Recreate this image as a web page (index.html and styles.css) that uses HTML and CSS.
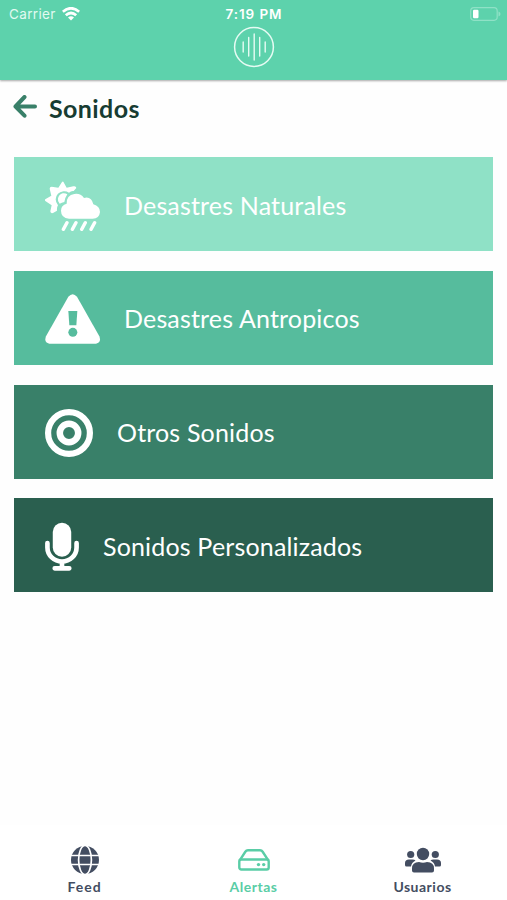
FILE: index.html
```html
<!DOCTYPE html>
<html lang="es">
<head>
    <meta charset="UTF-8">
    <meta name="viewport" content="width=device-width, initial-scale=1.0">
    <title>Sonidos</title>
    <link rel="stylesheet" href="styles.css">
</head>
<body>
    <header class="header">
        <div class="status">
            <div class="carrier">
                <span>Carrier</span>
                <svg width="18" height="14" viewBox="0 0 18 14" fill="none" stroke="#fff" stroke-width="2.8">
                    <path d="M.8 4.8Q9-2.2 17.2 4.8"/>
                    <path d="M3.8 8.2Q9 3.7 14.2 8.2"/>
                    <path d="M6 10.5Q9 8 12 10.5L9 13.5z" fill="#fff" stroke="none"/>
                </svg>
            </div>
            <span class="time">7:19 PM</span>
            <svg class="battery" width="31" height="14" viewBox="0 0 31 14">
                <rect x=".7" y=".7" width="26.5" height="12.6" rx="3.2" fill="none" stroke="#8fe1c6" stroke-width="1.2"/>
                <rect x="3" y="2.8" width="5.5" height="8.5" rx="1.2" fill="#fff"/>
                <path d="M28.5 4.5q2 .8 2 2.5t-2 2.5z" fill="#8fe1c6"/>
            </svg>
        </div>
        <svg class="logo" width="42" height="42" viewBox="0 0 42 42" fill="none" stroke="#e6fbf3">
            <circle cx="21" cy="21" r="19.4" stroke-width="1.5"/>
            <path d="M10.2 16v10M15.7 11.5v18.5M21.2 8v26M26.7 11.5v18.5M32.2 16v10" stroke-width="1.4" stroke-linecap="round"/>
        </svg>
    </header>

    <div class="title">
        <svg width="24" height="23" viewBox="0 0 24 23" fill="none" stroke="#398069" stroke-width="4" stroke-linecap="round" stroke-linejoin="round">
            <path d="M11.5 2L2.5 11.5l9 9.2M2.5 11.5H22"/>
        </svg>
        <h1>Sonidos</h1>
    </div>

    <main class="menu">
        <div class="item naturales">
            <svg width="56" height="50" viewBox="0 0 168 150" fill="#fff">
                <path d="M55 2L65 20 85 16Q93 14 94 21L86 30Q78 29 72 35Q64 30 55 31Q34 34 32 55Q32 64 39 73Q35 79 36 89L24 96Q16 98 16 91L20 73 1 60Q-2 57 2 54L19 44 14 23Q14 17 20 17L40 20 51 3Q53 0 55 2z"/>
                <path d="M67 40Q60 50 58 63Q50 65 44 68Q37 59 39 52Q42 40 53 37Q61 36 67 40z"/>
                <path d="M72 113Q48 111 48 89Q48 72 65 68Q64 43 88 39Q106 36 117 51Q139 45 145 70Q165 76 165 93Q163 113 143 113z"/>
                <path d="M66 125l-11 20M93 125l-11 20M121 125l-11 20M149 125l-11 20" stroke="#fff" stroke-width="10" stroke-linecap="round"/>
            </svg>
            <span>Desastres Naturales</span>
        </div>
        <div class="item antropicos">
            <svg width="56" height="50" viewBox="0 0 168 150" fill="#fff">
                <path d="M70 8Q83-7 96 8L163 127Q170 145 153 149H13Q-4 145 3 127z"/>
                <path d="M70 51H97L94 94H73z" fill="#56bc9d"/>
                <circle cx="83.5" cy="115" r="13.5" fill="#56bc9d"/>
            </svg>
            <span>Desastres Antropicos</span>
        </div>
        <div class="item otros">
            <svg width="48" height="48" viewBox="0 0 48 48" fill="none" stroke="#fff">
                <circle cx="24" cy="24" r="20.9" stroke-width="6.2"/>
                <circle cx="24" cy="24" r="9.2" stroke-width="6.5"/>
            </svg>
            <span>Otros Sonidos</span>
        </div>
        <div class="item personalizados">
            <svg width="34" height="50" viewBox="0 0 35 50">
                <rect x="8" y="0" width="19" height="35" rx="9.5" fill="#fff"/>
                <path d="M2.5 21v4.500a15 14.500 0 0 0 30 0V21M17.500 41v5M10 47h15" fill="none" stroke="#fff" stroke-width="4.8" stroke-linecap="round"/>
            </svg>
            <span>Sonidos Personalizados</span>
        </div>
    </main>

    <nav class="tabs">
        <div class="tab feed">
            <svg width="28" height="28" viewBox="0 0 28 28">
                <circle cx="14" cy="14" r="14" fill="#434d61"/>
                <g fill="none" stroke="#fff" stroke-width="1.7">
                    <ellipse cx="14" cy="14" rx="6.4" ry="14.5"/>
                    <path d="M0 9.5h28M0 18.5h28"/>
                </g>
            </svg>
            <span>Feed</span>
        </div>
        <div class="tab alertas">
            <svg width="32" height="28" viewBox="0 0 32 28" fill="none" stroke="#5acda6" stroke-width="2.4" stroke-linejoin="round">
                <rect x="1.3" y="13.5" width="29.4" height="10" rx="2"/>
                <path d="M1.7 14.3L7.5 5.5Q8.3 4.2 10 4.2H22Q23.7 4.2 24.5 5.5L30.3 14.3"/>
                <circle cx="20.5" cy="18.6" r="1.7" fill="#5acda6" stroke="none"/>
                <circle cx="25.7" cy="18.6" r="1.7" fill="#5acda6" stroke="none"/>
            </svg>
            <span>Alertas</span>
        </div>
        <div class="tab usuarios">
            <svg width="36" height="28" viewBox="0 0 36 28" fill="#434d61">
                <circle cx="18" cy="8" r="6.2"/>
                <circle cx="5.7" cy="8.5" r="3.6"/>
                <circle cx="30.3" cy="8.5" r="3.6"/>
                <path d="M7 24.5v-2q0-6.5 7-6.500 4 1.500 8 0 7 0 7 6.500v2q0 2-2 2H9q-2 0-2-2z"/>
                <path d="M0 19v-2q0-3.500 4-3.500h3.500q2 0 3 1Q6.500 16.500 6 20.500H1.500Q0 20.500 0 19zM36 19v-2q0-3.500-4-3.500h-3.500q-2 0-3 1 4 2 4.500 6h4.500q1.500 0 1.500-1.500z"/>
            </svg>
            <span>Usuarios</span>
        </div>
    </nav>
</body>
</html>
```
FILE: styles.css
```css
* {
    box-sizing: border-box;
}
body {
    margin: 0;
    height: 900px;
    display: flex;
    flex-direction: column;
    background: #fefefe;
    font-family: Lato, "Liberation Sans", sans-serif;
    overflow: hidden;
}
svg {
    display: block;
    flex-shrink: 0;
}
.header {
    height: 80px;
    background: #5dd2ac;
    box-shadow: 0 1px 2px rgba(0, 0, 0, 0.35);
}
.status {
    display: grid;
    grid-template-columns: 1fr auto 1fr;
    align-items: center;
    height: 26px;
    padding: 1px 6px 0 9px;
    color: #fff;
    font-family: Inter, sans-serif;
    font-size: 13.5px;
}
.carrier {
    display: flex;
    align-items: center;
    gap: 6px;
    color: #e1faf1;
    letter-spacing: 0.35px;
}
.time {
    margin-right: 2px;
    font-weight: 600;
    letter-spacing: 0.9px;
}
.battery {
    justify-self: end;
}
.logo {
    margin: 0 auto;
}
.title {
    display: flex;
    align-items: center;
    gap: 12px;
    height: 77px;
    padding: 0 13px 25px;
}
.title h1 {
    margin: 4px 0 0;
    color: #173c32;
    font-size: 25px;
    font-weight: 700;
    letter-spacing: 0.4px;
}
.menu {
    display: flex;
    flex-direction: column;
    gap: 19.8px;
    padding: 0 14px;
}
.item {
    display: flex;
    align-items: center;
    gap: 23px;
    height: 94px;
    padding: 3px 31px 0;
    color: #fff;
    font-size: 25px;
    letter-spacing: 0.17px;
}
.item span {
    margin-top: -2px;
}
.naturales {
    background: #8fe1c6;
}
.antropicos {
    background: #56bc9d;
}
.otros {
    gap: 24px;
    background: #398069;
}
.personalizados {
    gap: 24px;
    background: #2a5f4f;
}
.tabs {
    display: flex;
    height: 75px;
    margin-top: auto;
    background: #fff;
}
.tab {
    flex: 1;
    display: flex;
    flex-direction: column;
    align-items: center;
    gap: 4px;
    padding-top: 21px;
    color: #434d61;
    font-size: 14px;
    font-weight: 700;
    letter-spacing: 0.5px;
}
.feed {
    letter-spacing: 1px;
}
.alertas {
    color: #5acda6;
}
```
